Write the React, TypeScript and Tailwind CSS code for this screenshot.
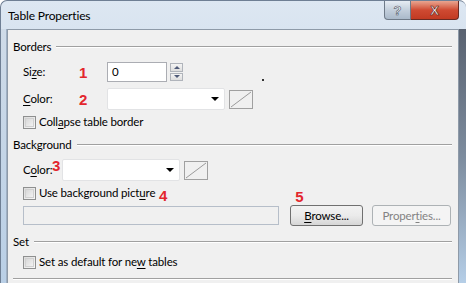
import React from "react";

const font = { fontFamily: 'Lato, "Noto Sans", sans-serif' };

function U({ children }: { children: React.ReactNode }) {
  return <span className="underline underline-offset-2">{children}</span>;
}

function Num({ n, className }: { n: string; className?: string }) {
  return (
    <span
      className={`text-[15px] font-bold leading-none tracking-normal text-[#e3262d] ${className ?? ""}`}
      style={{ fontFamily: '"Liberation Sans", Arial, sans-serif' }}
    >
      {n}
    </span>
  );
}

function GroupHeader({ label, className }: { label: string; className?: string }) {
  return (
    <div className={`flex h-[16px] items-center ${className ?? ""}`}>
      <span className="leading-none">{label}</span>
      <div className="ml-[5px] h-[2px] flex-1 border-t border-t-[#a0a0a0] border-b border-b-white" />
    </div>
  );
}

function CheckBox() {
  return (
    <span className="box-border block h-[13px] w-[13px] shrink-0 border border-[#8e8f8f] bg-gradient-to-br from-[#dcdcdc] to-[#f8f8f8] p-[1px]">
      <span className="block h-full w-full border border-[#d0d0d0] bg-gradient-to-br from-[#d8d8d8] to-[#f2f2f2]" />
    </span>
  );
}

function CheckRow({ children, className }: { children: React.ReactNode; className?: string }) {
  return (
    <div className={`flex h-[16px] items-center pl-[10px] ${className ?? ""}`}>
      <CheckBox />
      <span className="ml-[3px] whitespace-nowrap leading-none">{children}</span>
    </div>
  );
}

function Dropdown({ width }: { width: string }) {
  return (
    <div className={`flex h-[22px] ${width} items-center justify-end rounded-[2px] border border-[#e2e3e5] bg-white pr-[5px]`}>
      <span className="h-0 w-0 border-x-[4px] border-t-[4px] border-x-transparent border-t-black" />
    </div>
  );
}

function Swatch({ className }: { className?: string }) {
  return (
    <div className={`box-border h-[19px] w-[24px] border border-[#a0a0a0] ${className ?? ""}`}>
      <svg width="22" height="17" viewBox="0 0 22 17">
        <line x1="1" y1="16" x2="21" y2="1" stroke="#9a9a9a" strokeWidth="1" />
      </svg>
    </div>
  );
}

export default function App() {
  return (
    <div
      className="relative h-[283px] w-[466px] overflow-hidden rounded-t-[7px] border-t border-l border-[#6f7f94] bg-gradient-to-b from-[#dde7f2] via-[#c9d8e8] to-[#bcd0e6] text-[11.5px] tracking-[-0.15px] text-black"
      style={font}
    >
      {/* title bar */}
      <div className="flex h-[28px] items-start">
        <span className="ml-[7px] mt-[7px] text-[12px] leading-[16px]">Table Properties</span>
        <div className="ml-auto mr-[7px] flex h-[19px]">
          <div className="flex w-[27px] items-center justify-center rounded-bl-[4px] border border-t-0 border-[#6e7a88] bg-gradient-to-b from-[#e6ecf3] via-[#c3cfdc] to-[#aab9ca]">
            <span
              className="text-[13px] font-bold leading-none text-white"
              style={{ WebkitTextStroke: "0.6px #4a5566", fontFamily: '"Liberation Sans", Arial, sans-serif' }}
            >
              ?
            </span>
          </div>
          <div className="flex w-[48px] items-center justify-center rounded-br-[4px] border border-t-0 border-l-0 border-[#6a2a22] bg-gradient-to-b from-[#e8a590] via-[#cf4a32] to-[#c23a22]">
            <span
              className="text-[13px] font-bold leading-none text-white"
              style={{ WebkitTextStroke: "0.6px #5a1a12", fontFamily: '"Liberation Sans", Arial, sans-serif' }}
            >
              X
            </span>
          </div>
        </div>
      </div>

      <div className="flex h-[255px]">
        <div className="w-[6px] border-r border-r-[#9fb0c4] bg-gradient-to-b from-[#cfdbe8] to-[#b9cfe6]" />
        {/* client area */}
        <div className="relative h-[270px] w-[452px] border border-[#8e9aa8] bg-[#f0f0f0] pl-[5px] pr-[6px] pt-[9px]">
          <GroupHeader label="Borders" />

          <div className="mt-[7px] flex h-[20px] items-center pl-[10px]">
            <span className="w-[56px] leading-none">
              Si<U>z</U>e:
            </span>
            <Num n="1" className="w-[28px]" />
            <div className="flex h-[20px] w-[60px] items-center border border-[#abadb3] bg-white pl-[4px] leading-none">0</div>
            <div className="ml-[3px] flex h-[18px] w-[13px] flex-col gap-[1px]">
              <div className="flex flex-1 items-center justify-center border border-[#b0b4bb] bg-gradient-to-b from-[#f4f4f4] to-[#dedede]">
                <span className="h-0 w-0 border-x-[3px] border-b-[3px] border-x-transparent border-b-[#4f5a78]" />
              </div>
              <div className="flex flex-1 items-center justify-center border border-[#b0b4bb] bg-gradient-to-b from-[#f4f4f4] to-[#dedede]">
                <span className="h-0 w-0 border-x-[3px] border-t-[3px] border-x-transparent border-t-[#4f5a78]" />
              </div>
            </div>
            <span className="ml-[79px] mt-[16px] h-[2px] w-[2px] bg-[#333]" />
          </div>

          <div className="mt-[6px] flex h-[22px] items-center pl-[10px]">
            <span className="w-[56px] leading-none">
              <U>C</U>olor:
            </span>
            <Num n="2" className="w-[28px]" />
            <Dropdown width="w-[118px]" />
            <Swatch className="ml-[4px]" />
          </div>

          <CheckRow className="mt-[4px]">
            Coll<U>a</U>pse table border
          </CheckRow>

          <GroupHeader label="Background" className="mt-[7px]" />

          <div className="mt-[6px] flex h-[22px] items-center pl-[10px]">
            <span className="w-[29px] whitespace-nowrap leading-none">
              C<U>o</U>lor:
            </span>
            <Num n="3" className="-mt-[10px] w-[10px]" />
            <Dropdown width="w-[118px]" />
            <Swatch className="ml-[4px]" />
          </div>

          <div className="mt-[4px] flex h-[16px] items-center pl-[10px]">
            <CheckBox />
            <span className="ml-[3px] w-[120px] whitespace-nowrap leading-none">
              Use background pict<U>u</U>re
            </span>
            <Num n="4" className="mt-[4px]" />
            <Num n="5" className="ml-[128px] mt-[6px]" />
          </div>

          <div className="mt-[4px] flex h-[21px] items-center pl-[10px]">
            <div className="h-[19px] w-[256px] border border-[#b6bec9] bg-[#f0f0f0]" />
            <button className="ml-[11px] flex h-[21px] w-[73px] items-center justify-center rounded-[3px] border border-[#707070] bg-gradient-to-b from-[#f2f2f2] via-[#ebebeb] to-[#d6d6d6] leading-none">
              <U>B</U>rowse...
            </button>
            <button className="ml-[9px] flex h-[21px] w-[79px] items-center justify-center rounded-[3px] border border-[#adb2b5] bg-[#f4f4f4] leading-none text-[#838383]">
              Proper<U>t</U>ies...
            </button>
          </div>

          <GroupHeader label="Set" className="mt-[8px]" />

          <CheckRow className="mt-[4px]">
            Set as default for ne<U>w</U> tables
          </CheckRow>

          <div className="mt-[8px] h-[2px] border-t border-t-[#a0a0a0] border-b border-b-white" />
        </div>
        <div className="w-[7px] bg-gradient-to-b from-[#596270] via-[#7d8c9e] to-[#b6cfe8]" />
      </div>
    </div>
  );
}
